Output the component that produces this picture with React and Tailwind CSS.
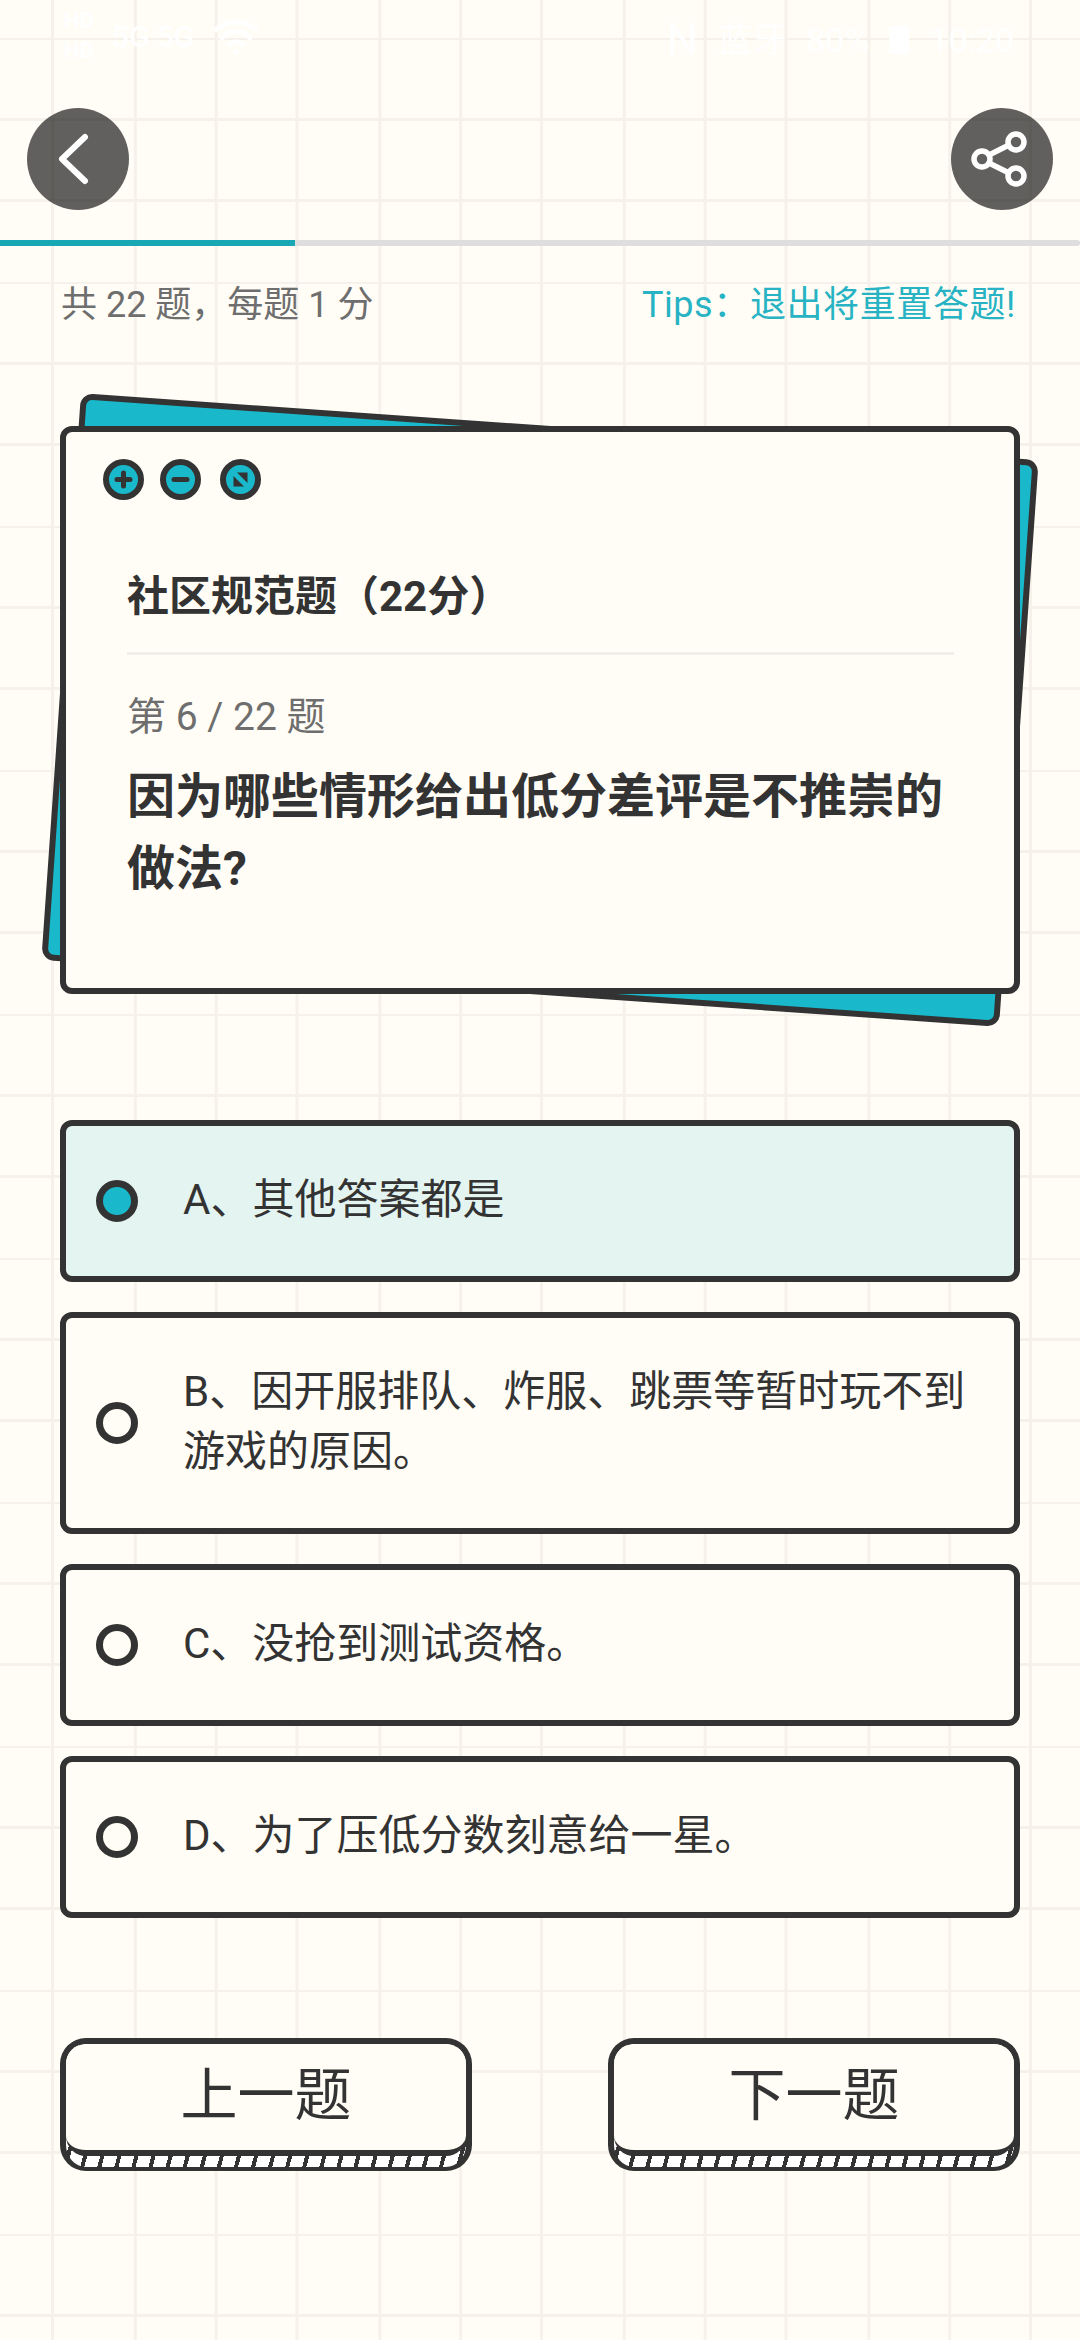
import React from "react";
import { Wifi } from "lucide-react";

function Dot({ children }) {
  return (
    <div className="w-[41px] h-[41px] rounded-full border-[6px] border-[#333] bg-[#19b8cb] flex items-center justify-center">
      <svg width="29" height="29" viewBox="0 0 29 29">{children}</svg>
    </div>
  );
}

function Option({ label, selected, tall }) {
  return (
    <div
      className={`flex items-center gap-[45px] pl-[30px] pr-[30px] border-[6px] border-[#333] rounded-[12px] ${tall ? "h-[222px]" : "h-[162px]"} ${selected ? "bg-[#e4f4f0]" : "bg-[#fffdf6]"}`}
    >
      <div className={`shrink-0 w-[42px] h-[42px] rounded-full border-[7px] border-[#333] ${selected ? "bg-[#19b8cb]" : "bg-[#fffdf6]"}`} />
      <div className="-mt-[3px] text-[42px] leading-[60px] text-[#333]">{label}</div>
    </div>
  );
}

function NavButton({ label }) {
  return (
    <div className="w-[412px] h-[133px] rounded-[26px] border-x-[6px] border-t-[6px] border-b-[4px] border-[#333] overflow-hidden bg-[repeating-linear-gradient(105deg,#ffffff_0_12.5px,#333333_12.5px_16.5px)]">
      <div className="h-[112px] pb-[2px] bg-[#fffdf6] border-b-[6px] border-[#333] rounded-b-[20px] flex items-center justify-center text-[57px] text-[#333]">
        {label}
      </div>
    </div>
  );
}

export default function App() {
  return (
    <div className="w-[1080px] h-[2340px] overflow-hidden bg-[#fffdf6] font-['Roboto','Noto_Sans_CJK_SC',sans-serif] bg-[image:linear-gradient(90deg,#f6f2eb_0_3px,transparent_3px_83px,#f6f2eb_83px_86px,transparent_86px_164px,#f6f2eb_164px_167px,transparent_167px),linear-gradient(180deg,#f6f2eb_0_3px,transparent_3px_81px,#f6f2eb_81px_84px,transparent_84px_162px,#f6f2eb_162px_165px,transparent_165px)] bg-[size:244.5px_244px] bg-[position:51px_37px]">
      <div className="h-[108px] flex justify-between items-start pt-[8px] pl-[64px] pr-[66px] text-white">
        <div className="flex items-center gap-[18px] h-[56px]">
          <div className="flex flex-col gap-[6px] text-[22px] leading-[24px] font-bold">
            <span>HD</span>
            <span>HD</span>
          </div>
          <span className="text-[30px] font-medium">5G 5G</span>
          <Wifi size={48} color="#ffffff" strokeWidth={2.5} />
        </div>
        <div className="flex items-center gap-[20px] h-[64px] text-[34px] leading-none">
          <span className="text-[44px]">N</span>
          <span>蓝牙</span>
          <span>80%</span>
          <div className="w-[20px] h-[28px] bg-white" />
          <span>10:20</span>
        </div>
      </div>

      <div className="h-[102px] px-[27px] flex justify-between">
        <div className="w-[102px] h-[102px] rounded-full bg-[rgba(0,0,0,0.62)]">
          <svg width="102" height="102" viewBox="0 0 102 102" fill="none" stroke="#ffffff" strokeWidth="6" strokeLinecap="round" strokeLinejoin="round">
            <path d="M58 29 L35 51 L58 73" />
          </svg>
        </div>
        <div className="w-[102px] h-[102px] rounded-full bg-[rgba(0,0,0,0.62)]">
          <svg width="102" height="102" viewBox="0 0 102 102" fill="none" stroke="#ffffff" strokeWidth="5.5">
            <circle cx="65" cy="34" r="8" />
            <circle cx="31" cy="51" r="8" />
            <circle cx="65" cy="68" r="8" />
            <path d="M38 47 L58 37 M38 55 L58 65" />
          </svg>
        </div>
      </div>

      <div className="mt-[30px] h-[6px] bg-[#dedede] rounded-r-full">
        <div className="h-full w-[295px] bg-[#17a7b5]" />
      </div>

      <div className="mt-[32px] h-[54px] pl-[61px] pr-[64px] flex justify-between items-center text-[36px] leading-[54px]">
        <span className="text-[#6e6e6e]">共 22 题，每题 1 分</span>
        <span className="text-[#27b3c3] tracking-[0.6px]">Tips：退出将重置答题!</span>
      </div>

      <div className="relative mt-[94px] mx-[60px] h-[568px]">
        <div className="absolute inset-0 rotate-[4deg] bg-[#19b8cb] border-[6px] border-[#333] rounded-[12px]" />
        <div className="absolute inset-0 bg-[#fffdf6] border-[6px] border-[#333] rounded-[12px] pl-[61px] pr-[60px] pt-[27px]">
          <div className="flex -ml-[24px] gap-[16px]">
            <Dot>
              <path d="M14.5 8 V21 M8 14.5 H21" stroke="#333" strokeWidth="5" strokeLinecap="round" fill="none" />
            </Dot>
            <Dot>
              <path d="M8 14.5 H21" stroke="#333" strokeWidth="5" strokeLinecap="round" fill="none" />
            </Dot>
            <div className="ml-[3px]">
              <Dot>
                <path d="M11 7.5 H21.5 V18 Z" fill="#333" />
                <path d="M7.5 11 V21.5 H18 Z" fill="#333" />
              </Dot>
            </div>
          </div>
          <div className="mt-[67px] text-[42px] leading-[60px] font-bold text-[#333]">社区规范题（22分）</div>
          <div className="mt-[25px] h-[3px] bg-[#f1efe9]" />
          <div className="mt-[35px] text-[39px] leading-[54px] text-[#6e6e6e]">第 6 / 22 题</div>
          <div className="mt-[17px] text-[48px] leading-[72px] font-bold text-[#333]">因为哪些情形给出低分差评是不推崇的做法?</div>
        </div>
      </div>

      <div className="mt-[126px] mx-[60px] flex flex-col gap-[30px]">
        <Option label="A、其他答案都是" selected />
        <Option label="B、因开服排队、炸服、跳票等暂时玩不到游戏的原因。" tall />
        <Option label="C、没抢到测试资格。" />
        <Option label="D、为了压低分数刻意给一星。" />
      </div>

      <div className="mt-[120px] mx-[60px] flex justify-between">
        <NavButton label="上一题" />
        <NavButton label="下一题" />
      </div>
    </div>
  );
}
